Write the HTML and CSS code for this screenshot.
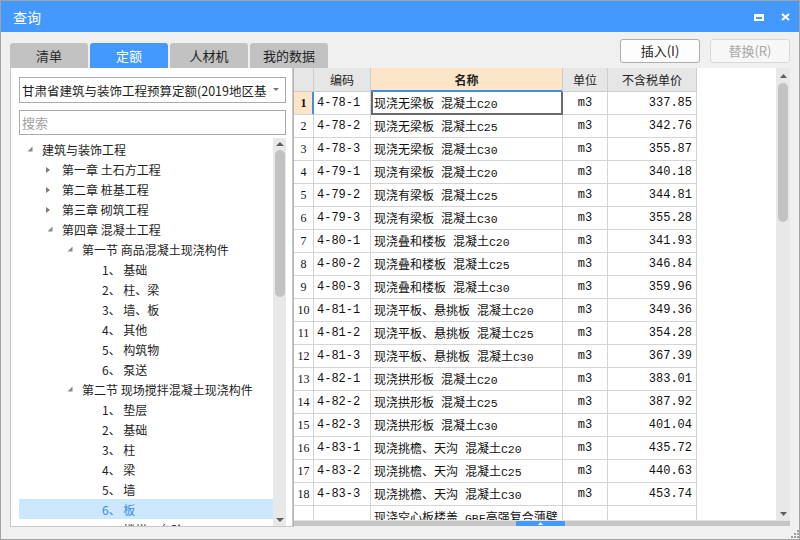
FILE: index.html
```html
<!DOCTYPE html>
<html lang="zh-CN">
<head>
<meta charset="utf-8">
<title>查询</title>
<link rel="stylesheet" href="styles.css">
</head>
<body>
<div class="window">
  <div class="titlebar">
    <span class="title">查询</span>
    <div class="win-btns">
      <svg width="10" height="7" viewBox="0 0 10 7"><path d="M0 0H10V7H0Z M2 3H8V5H2Z" fill="#fff" fill-rule="evenodd"/></svg>
      <svg width="9" height="8" viewBox="0 0 9 8"><path d="M1 1L8 7M8 1L1 7" stroke="#fff" stroke-width="2" fill="none"/></svg>
    </div>
  </div>

  <div class="toolbar">
    <div class="tabs">
      <div class="tab first">清单</div>
      <div class="tab active">定额</div>
      <div class="tab">人材机</div>
      <div class="tab">我的数据</div>
    </div>
    <div class="actions">
      <div class="btn">插入(I)</div>
      <div class="btn disabled">替换(R)</div>
    </div>
  </div>

  <div class="main">
    <div class="left-panel">
      <div class="select">
        <span class="select-text">甘肃省建筑与装饰工程预算定额(2019地区基价)</span>
        <span class="select-arrow"><svg width="6" height="4" viewBox="0 0 6 4"><polygon points="0,0 6,0 3,3" fill="#777"/></svg></span>
      </div>
      <div class="search">搜索</div>
      <div class="tree-wrap">
        <div class="tree">
          <div class="tree-row l0"><svg class="tw" viewBox="0 0 18 20"><polygon points="8.5,7.5 8.5,12.5 3.5,12.5" fill="#8a8a8a"/></svg><span>建筑与装饰工程</span></div>
          <div class="tree-row l1"><svg class="tw" viewBox="0 0 18 20"><polygon points="2,8 6,11 2,14" fill="#7c7c7c"/></svg><span>第一章 土石方工程</span></div>
          <div class="tree-row l1"><svg class="tw" viewBox="0 0 18 20"><polygon points="2,8 6,11 2,14" fill="#7c7c7c"/></svg><span>第二章 桩基工程</span></div>
          <div class="tree-row l1"><svg class="tw" viewBox="0 0 18 20"><polygon points="2,8 6,11 2,14" fill="#7c7c7c"/></svg><span>第三章 砌筑工程</span></div>
          <div class="tree-row l1"><svg class="tw" viewBox="0 0 18 20"><polygon points="8.5,7.5 8.5,12.5 3.5,12.5" fill="#8a8a8a"/></svg><span>第四章 混凝土工程</span></div>
          <div class="tree-row l2"><svg class="tw" viewBox="0 0 18 20"><polygon points="8.5,7.5 8.5,12.5 3.5,12.5" fill="#8a8a8a"/></svg><span>第一节 商品混凝土现浇构件</span></div>
          <div class="tree-row l3"><span class="tw"></span><span>1、 基础</span></div>
          <div class="tree-row l3"><span class="tw"></span><span>2、 柱、梁</span></div>
          <div class="tree-row l3"><span class="tw"></span><span>3、 墙、板</span></div>
          <div class="tree-row l3"><span class="tw"></span><span>4、 其他</span></div>
          <div class="tree-row l3"><span class="tw"></span><span>5、 构筑物</span></div>
          <div class="tree-row l3"><span class="tw"></span><span>6、 泵送</span></div>
          <div class="tree-row l2"><svg class="tw" viewBox="0 0 18 20"><polygon points="8.5,7.5 8.5,12.5 3.5,12.5" fill="#8a8a8a"/></svg><span>第二节 现场搅拌混凝土现浇构件</span></div>
          <div class="tree-row l3"><span class="tw"></span><span>1、 垫层</span></div>
          <div class="tree-row l3"><span class="tw"></span><span>2、 基础</span></div>
          <div class="tree-row l3"><span class="tw"></span><span>3、 柱</span></div>
          <div class="tree-row l3"><span class="tw"></span><span>4、 梁</span></div>
          <div class="tree-row l3"><span class="tw"></span><span>5、 墙</span></div>
          <div class="tree-row l3 sel"><span class="tw"></span><span>6、 板</span></div>
          <div class="tree-row l3"><span class="tw"></span><span>7、 楼梯、台阶</span></div>
        </div>
        <div class="vscroll tree-scroll">
          <svg class="sb-up" width="8" height="4" viewBox="0 0 8 4"><polygon points="0,4 8,4 4,0" fill="#5f5f5f"/></svg>
          <div class="thumb"></div>
          <div class="sb-space"></div>
          <svg class="sb-down" width="8" height="4" viewBox="0 0 8 4"><polygon points="0,0 8,0 4,4" fill="#5f5f5f"/></svg>
        </div>
      </div>
    </div>

    <div class="grid-panel">
      <div class="grid-top">
        <div class="grid">
          <div class="row hdr">
            <div></div><div>编码</div><div class="cur-col">名称</div><div>单位</div><div>不含税单价</div>
          </div>
          <div class="row">
            <div class="rn cur-row">1</div><div class="m code">4-78-1</div><div class="name cur-cell">现浇无梁板<span class="m"> </span>混凝土<span class="m">C20</span></div><div class="m unit">m3</div><div class="m price">337.85</div>
          </div>
          <div class="row">
            <div class="rn">2</div><div class="m code">4-78-2</div><div class="name">现浇无梁板<span class="m"> </span>混凝土<span class="m">C25</span></div><div class="m unit">m3</div><div class="m price">342.76</div>
          </div>
          <div class="row">
            <div class="rn">3</div><div class="m code">4-78-3</div><div class="name">现浇无梁板<span class="m"> </span>混凝土<span class="m">C30</span></div><div class="m unit">m3</div><div class="m price">355.87</div>
          </div>
          <div class="row">
            <div class="rn">4</div><div class="m code">4-79-1</div><div class="name">现浇有梁板<span class="m"> </span>混凝土<span class="m">C20</span></div><div class="m unit">m3</div><div class="m price">340.18</div>
          </div>
          <div class="row">
            <div class="rn">5</div><div class="m code">4-79-2</div><div class="name">现浇有梁板<span class="m"> </span>混凝土<span class="m">C25</span></div><div class="m unit">m3</div><div class="m price">344.81</div>
          </div>
          <div class="row">
            <div class="rn">6</div><div class="m code">4-79-3</div><div class="name">现浇有梁板<span class="m"> </span>混凝土<span class="m">C30</span></div><div class="m unit">m3</div><div class="m price">355.28</div>
          </div>
          <div class="row">
            <div class="rn">7</div><div class="m code">4-80-1</div><div class="name">现浇叠和楼板<span class="m"> </span>混凝土<span class="m">C20</span></div><div class="m unit">m3</div><div class="m price">341.93</div>
          </div>
          <div class="row">
            <div class="rn">8</div><div class="m code">4-80-2</div><div class="name">现浇叠和楼板<span class="m"> </span>混凝土<span class="m">C25</span></div><div class="m unit">m3</div><div class="m price">346.84</div>
          </div>
          <div class="row">
            <div class="rn">9</div><div class="m code">4-80-3</div><div class="name">现浇叠和楼板<span class="m"> </span>混凝土<span class="m">C30</span></div><div class="m unit">m3</div><div class="m price">359.96</div>
          </div>
          <div class="row">
            <div class="rn">10</div><div class="m code">4-81-1</div><div class="name">现浇平板、悬挑板<span class="m"> </span>混凝土<span class="m">C20</span></div><div class="m unit">m3</div><div class="m price">349.36</div>
          </div>
          <div class="row">
            <div class="rn">11</div><div class="m code">4-81-2</div><div class="name">现浇平板、悬挑板<span class="m"> </span>混凝土<span class="m">C25</span></div><div class="m unit">m3</div><div class="m price">354.28</div>
          </div>
          <div class="row">
            <div class="rn">12</div><div class="m code">4-81-3</div><div class="name">现浇平板、悬挑板<span class="m"> </span>混凝土<span class="m">C30</span></div><div class="m unit">m3</div><div class="m price">367.39</div>
          </div>
          <div class="row">
            <div class="rn">13</div><div class="m code">4-82-1</div><div class="name">现浇拱形板<span class="m"> </span>混凝土<span class="m">C20</span></div><div class="m unit">m3</div><div class="m price">383.01</div>
          </div>
          <div class="row">
            <div class="rn">14</div><div class="m code">4-82-2</div><div class="name">现浇拱形板<span class="m"> </span>混凝土<span class="m">C25</span></div><div class="m unit">m3</div><div class="m price">387.92</div>
          </div>
          <div class="row">
            <div class="rn">15</div><div class="m code">4-82-3</div><div class="name">现浇拱形板<span class="m"> </span>混凝土<span class="m">C30</span></div><div class="m unit">m3</div><div class="m price">401.04</div>
          </div>
          <div class="row">
            <div class="rn">16</div><div class="m code">4-83-1</div><div class="name">现浇挑檐、天沟<span class="m"> </span>混凝土<span class="m">C20</span></div><div class="m unit">m3</div><div class="m price">435.72</div>
          </div>
          <div class="row">
            <div class="rn">17</div><div class="m code">4-83-2</div><div class="name">现浇挑檐、天沟<span class="m"> </span>混凝土<span class="m">C25</span></div><div class="m unit">m3</div><div class="m price">440.63</div>
          </div>
          <div class="row">
            <div class="rn">18</div><div class="m code">4-83-3</div><div class="name">现浇挑檐、天沟<span class="m"> </span>混凝土<span class="m">C30</span></div><div class="m unit">m3</div><div class="m price">453.74</div>
          </div>
          <div class="row tall">
            <div class="rn"></div><div class="m code"></div><div class="name">现浇空心板楼盖<span class="m"> GBF</span>高强复合薄壁</div><div class="m unit"></div><div class="m price"></div>
          </div>
        </div>
        <div class="vscroll grid-scroll">
          <svg class="sb-up" width="7" height="4" viewBox="0 0 7 4"><polygon points="0,4 7,4 3.5,0" fill="#5f5f5f"/></svg>
          <div class="thumb"></div>
          <div class="sb-space"></div>
          <svg class="sb-down" width="7" height="4" viewBox="0 0 7 4"><polygon points="0,0 7,0 3.5,4" fill="#5f5f5f"/></svg>
        </div>
      </div>
      <div class="hscroll">
        <div class="hthumb"><svg width="5" height="3" viewBox="0 0 5 3"><polygon points="0,3 5,3 2.5,0" fill="#fff"/></svg></div>
      </div>
    </div>
  </div>

  <div class="status">
    <svg width="9" height="9" viewBox="0 0 9 9">
      <rect x="7" y="1" width="2" height="2" fill="#a0a0a0"/>
      <rect x="4" y="4" width="2" height="2" fill="#a0a0a0"/>
      <rect x="7" y="4" width="2" height="2" fill="#a0a0a0"/>
      <rect x="1" y="7" width="2" height="2" fill="#a0a0a0"/>
      <rect x="4" y="7" width="2" height="2" fill="#a0a0a0"/>
      <rect x="7" y="7" width="2" height="2" fill="#a0a0a0"/>
    </svg>
  </div>
</div>
</body>
</html>
```

FILE: styles.css
```css
* { box-sizing: border-box; }

body {
  margin: 0;
  font-family: "Noto Sans CJK SC", "Noto Sans", sans-serif;
  background: #f0f0f0;
}

.window {
  width: 800px;
  height: 540px;
  border: 1px solid #a3a3a3;
  background: #f0f0f0;
  display: flex;
  flex-direction: column;
}

/* title bar */
.titlebar {
  height: 31px;
  flex-shrink: 0;
  background: #4499ff;
  color: #fff;
  display: flex;
  align-items: center;
  justify-content: space-between;
  padding: 0 9px 0 12px;
}
.title { font-size: 14px; line-height: 1; }
.win-btns { display: flex; align-items: center; gap: 17px; padding-top: 1px; }
.win-btns svg { display: block; }

/* toolbar */
.toolbar {
  height: 36px;
  flex-shrink: 0;
  display: flex;
  justify-content: space-between;
  padding: 0 9px;
}
.tabs { display: flex; gap: 2px; align-self: flex-end; }
.tab {
  width: 78px;
  height: 25px;
  background: #c2c2c2;
  border-radius: 3px 3px 0 0;
  font-size: 13px;
  line-height: 25px;
  color: #222;
  text-align: center;
}
.tab.first { padding-left: 26px; text-align: left; color: #2b2b2b; }
.tab.active { background: #4499ff; color: #fff; }

.actions { display: flex; gap: 10px; padding-top: 7px; }
.btn {
  width: 80px;
  height: 24px;
  border: 1px solid #adadad;
  border-radius: 3px;
  background: #fdfdfd;
  font-size: 13px;
  line-height: 22px;
  color: #222;
  text-align: center;
}
.btn.disabled { border-color: #d8d8d8; color: #a8a8a8; background: #f7f7f7; }

/* main area */
.main {
  height: 459px;
  flex-shrink: 0;
  display: flex;
  padding: 0 9px;
}

.left-panel {
  width: 283px;
  flex-shrink: 0;
  background: #fff;
  border: 1px solid #c8c8c8;
  border-top: none;
  padding: 9px 6px 0 8px;
  display: flex;
  flex-direction: column;
}

.select {
  height: 26px;
  flex-shrink: 0;
  border: 1px solid #acacac;
  display: flex;
  align-items: center;
  padding-left: 2px;
  font-size: 12.5px;
  color: #1e1e1e;
}
.select-text { flex: 1; overflow: hidden; white-space: nowrap; }
.select-arrow {
  width: 18px;
  flex-shrink: 0;
  display: flex;
  justify-content: center;
  align-items: center;
}
.select-arrow svg { display: block; }

.search {
  margin-top: 7px;
  height: 25px;
  flex-shrink: 0;
  border: 1px solid #acacac;
  padding-left: 2px;
  font-size: 13px;
  line-height: 23px;
  color: #a3a3a3;
}

.tree-wrap {
  margin-top: 3px;
  flex: 1;
  min-height: 0;
  display: flex;
}
.tree { flex: 1; overflow: hidden; padding-top: 1px; }
.tree-row {
  height: 20px;
  display: flex;
  align-items: center;
  font-size: 12px;
  color: #1e1e1e;
  white-space: nowrap;
}
.tree-row .tw { width: 18px; height: 20px; flex-shrink: 0; display: block; }
.l0 { padding-left: 5px; }
.l1 { padding-left: 25px; }
.l2 { padding-left: 45px; }
.l3 { padding-left: 65px; }
.tree-row.sel { background: #cce8ff; color: #3a8be4; }

/* scrollbars */
.vscroll {
  flex-shrink: 0;
  background: #e8e8e8;
  display: flex;
  flex-direction: column;
  align-items: center;
}
.vscroll svg { display: block; flex-shrink: 0; }
.vscroll .thumb { background: #c2c2c2; border-radius: 5px; flex-shrink: 0; }
.sb-space { flex: 1; }

.tree-scroll { width: 13px; }
.tree-scroll .sb-up { margin-top: 4px; }
.tree-scroll .thumb { width: 10px; height: 147px; margin-top: 4px; }
.tree-scroll .sb-down { margin-bottom: 4px; }

.grid-scroll { width: 14px; }
.grid-scroll .sb-up { margin-top: 6px; }
.grid-scroll .thumb { width: 10px; height: 139px; margin-top: 5px; }
.grid-scroll .sb-down { margin-bottom: 4px; }

/* grid panel */
.grid-panel {
  flex: 1;
  display: flex;
  flex-direction: column;
  border-left: 1px solid #b4b4b4;
}
.grid-top { flex: 1; min-height: 0; display: flex; }
.grid { flex: 1; background: #fff; overflow: hidden; }

.row {
  display: grid;
  grid-template-columns: 20px 57px 192px 45px 89px;
  width: 403px;
  height: 23px;
}
.row > div {
  border-right: 1px solid #d4d4d4;
  border-bottom: 1px solid #d4d4d4;
  display: flex;
  align-items: center;
  overflow: hidden;
  white-space: nowrap;
  font-size: 12px;
  color: #111;
}
.row > .name { display: block; line-height: 22px; }
.row.hdr { height: 24px; }
.row.hdr > div {
  background: #e6e6e6;
  justify-content: center;
  color: #222;
  border-color: #cdcdcd;
}
.row.hdr > .cur-col {
  background: #fde6c8;
  font-weight: bold;
  color: #222;
  border-bottom-color: #3d8fe8;
  box-shadow: inset 0 -1px 0 #3d8fe8;
}

.m { font-family: "Liberation Mono", monospace; font-size: 11px; }
.name .m { font-size: 11.5px; }
.rn {
  justify-content: center;
  font-family: "Liberation Serif", serif;
  font-size: 12.5px;
}
.rn.cur-row {
  background: #fde6c8;
  font-weight: bold;
  border-right-color: #3d8fe8 !important;
  box-shadow: inset -1px 0 0 #3d8fe8;
}
.code { padding-left: 3px; }
.name { padding-left: 3px; }
.unit { justify-content: center; }
.price { justify-content: flex-end; padding-right: 4px; }
.name.cur-cell {
  border-right-color: #6a6a6a !important;
  border-bottom-color: #6a6a6a !important;
  box-shadow: inset 2px 0 0 #6a6a6a, inset -1px -1px 0 #6a6a6a;
}
.row.tall { height: 40px; }
.row.tall > div { align-items: flex-start; padding-top: 3px; line-height: 16px; }

.hscroll {
  height: 7px;
  flex-shrink: 0;
  background: #c6c6c6;
  border-top: 1px solid #e2e2e2;
  border-bottom: 1px solid #f0f0f0;
  padding-left: 222px;
}
.hthumb {
  width: 49px;
  height: 100%;
  background: #4499ff;
  display: flex;
  align-items: center;
  justify-content: center;
}
.hthumb svg { display: block; }

.status {
  flex: 1;
  display: flex;
  justify-content: flex-end;
  align-items: flex-end;
  padding: 0 0 1px 0;
}
.status svg { display: block; }
```
